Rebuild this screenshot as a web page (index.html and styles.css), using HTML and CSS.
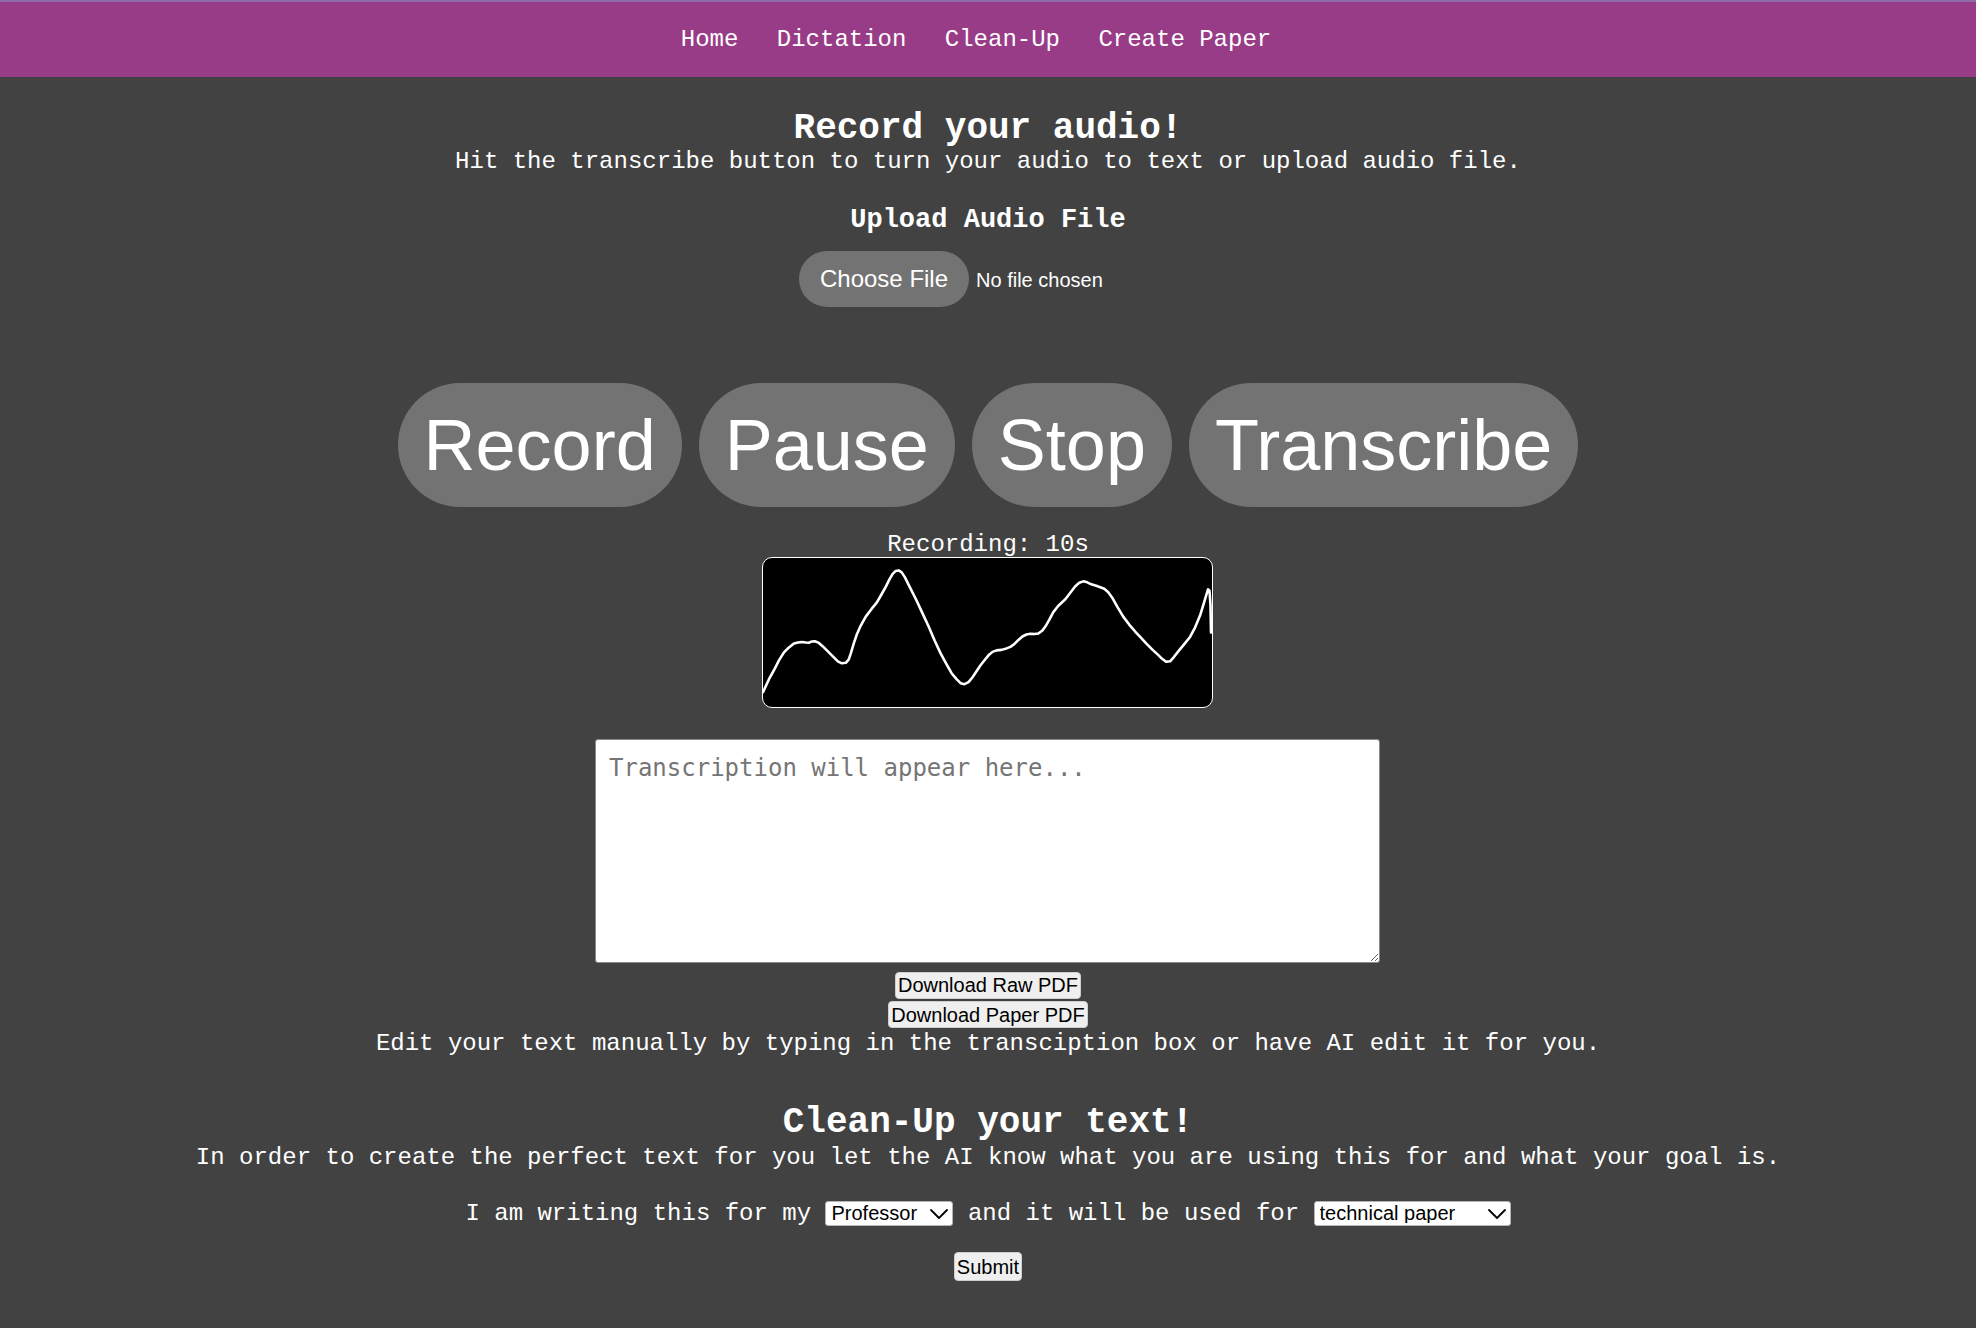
FILE: index.html
```html
<!DOCTYPE html>
<html lang="en">
<head>
<meta charset="utf-8">
<title>Dictation</title>
<link rel="stylesheet" href="styles.css">
</head>
<body>
<header class="topbar">
  <nav class="nav">
    <a href="#">Home</a>
    <a href="#">Dictation</a>
    <a href="#">Clean-Up</a>
    <a href="#">Create Paper</a>
  </nav>
</header>
<main class="page">
  <section class="block">
    <h2 class="title">Record your audio!</h2>
    <p class="lead">Hit the transcribe button to turn your audio to text or upload audio file.</p>
    <h3 class="subtitle">Upload Audio File</h3>
    <div class="upload"><input type="file" class="file" accept="audio/*"></div>
    <div class="controls">
      <button class="big" type="button">Record</button>
      <button class="big" type="button">Pause</button>
      <button class="big" type="button">Stop</button>
      <button class="big" type="button">Transcribe</button>
    </div>
    <div class="status">Recording: 10s</div>
    <div class="wave">
      <svg class="wave-svg" viewBox="0 0 450 150" preserveAspectRatio="none">
        <polyline fill="none" stroke="#fff" stroke-width="2.6" stroke-linejoin="round" stroke-linecap="round"
          points="0,135 6,122 11,113 16,103 21,95 26,90 31,86 35,85 39,84.5 43,85 46,85.3 49,84 52,83.8 56,85.5 60,89 65,94 71,100 75,104 79,106 83,105.5 86,102 88,96 91,86 94,77 98,68 103,59 109,51 114,45 118,38 123,29 127,21 130,16 133,13 136,12.5 139,14.5 142,19 147,29 154,43 160,56 166,69 172,83 178,96 184,107 189,116 194,122 198,126 202,127 206,125 210,120 214,114 218,108 222,103 226,98 230,94.5 234,93 239,92.5 244,91 248,89.5 252,86.5 256,82.5 260,79 264,77 268,76.3 272,76.5 276,76 280,73 283,69 287,62 291,54.5 296,48 303,41.5 308,35 313,28.5 317,25 321,23.5 325,24.5 329,26.5 334,28 338,29.5 342,31 346,34.5 350,40 355,49 361,59 367,67 373,74 378,79.5 384,86 391,93 396,97.5 400,101.5 404,104.5 408,104 412,99.5 417,93 422,87 428,79.5 433,70 438,58 442,45 446,31.5 447.5,33 448.5,48 449,75"/>
      </svg>
    </div>
    <textarea class="transcript" placeholder="Transcription will appear here..."></textarea>
    <div class="downloads">
      <button class="small" type="button">Download Raw PDF</button>
      <button class="small" type="button">Download Paper PDF</button>
    </div>
    <p class="note">Edit your text manually by typing in the transciption box or have AI edit it for you.</p>
  </section>
  <section class="block">
    <h2 class="title title-cleanup">Clean-Up your text!</h2>
    <p class="lead lead-cleanup">In order to create the perfect text for you let the AI know what you are using this for and what your goal is.</p>
    <div class="choices">
      <span>I am writing this for my</span>
      <span class="select-wrap">
        <select class="choice choice-role">
          <option>Professor</option>
          <option>Boss</option>
          <option>Friend</option>
          <option>Client</option>
        </select>
        <svg class="chev" viewBox="0 0 18 10"><polyline points="1,1 9,9 17,1" fill="none" stroke="#000" stroke-width="1.8" stroke-linecap="round" stroke-linejoin="round"/></svg>
      </span>
      <span>and it will be used for</span>
      <span class="select-wrap">
        <select class="choice choice-use">
          <option>technical paper</option>
          <option>email</option>
          <option>essay</option>
          <option>report</option>
        </select>
        <svg class="chev" viewBox="0 0 18 10"><polyline points="1,1 9,9 17,1" fill="none" stroke="#000" stroke-width="1.8" stroke-linecap="round" stroke-linejoin="round"/></svg>
      </span>
    </div>
    <button class="small submit" type="button">Submit</button>
  </section>
</main>
</body>
</html>
```

FILE: styles.css
```css
* {
  box-sizing: border-box;
}

html,
body {
  margin: 0;
  padding: 0;
}

body {
  background: #424242;
  color: #ffffff;
  font-family: "Liberation Mono", "Courier New", monospace;
  font-size: 24px;
  min-height: 1328px;
}

.topbar {
  background: #983c87;
  border-top: 2px solid #8c6aa7;
  height: 77px;
  display: flex;
  align-items: center;
}

.nav {
  width: 100%;
  display: flex;
  justify-content: center;
  gap: 38.4px;
  padding-right: 24px;
  line-height: 27px;
}

.nav a {
  color: #ffffff;
  text-decoration: none;
}

.page {
  display: flex;
  flex-direction: column;
  align-items: center;
  text-align: center;
}

.block {
  display: flex;
  flex-direction: column;
  align-items: center;
}

.title {
  margin: 33.2px 0 0;
  font-size: 36px;
  line-height: 38px;
  font-weight: bold;
}

.title-cleanup {
  margin-top: 46.1px;
}

.lead {
  margin: 0;
  line-height: 27.2px;
}

.lead-cleanup {
  margin-top: 2px;
}

.subtitle {
  margin: 30px 0 0;
  font-size: 27px;
  line-height: 31.7px;
  font-weight: bold;
}

.upload {
  margin-top: 14px;
  width: 378px;
  height: 56px;
  text-align: left;
}

.file {
  width: 378px;
  color: #ffffff;
  font-family: "Liberation Sans", Arial, sans-serif;
  font-size: 20px;
}

.file::file-selector-button {
  height: 56px;
  margin: 0 7px 0 0;
  padding: 0 21px;
  border: none;
  border-radius: 28px;
  background: #737373;
  color: #ffffff;
  font-family: "Liberation Sans", Arial, sans-serif;
  font-size: 24px;
}

.controls {
  margin-top: 76px;
  display: flex;
  gap: 17px;
}

.big {
  height: 124px;
  padding: 0 26px;
  border: none;
  border-radius: 62px;
  background: #737373;
  color: #ffffff;
  font-family: "Liberation Sans", Arial, sans-serif;
  font-size: 72px;
  line-height: 1;
}

.status {
  margin-top: 27.2px;
  line-height: 22.6px;
}

.wave {
  width: 451px;
  height: 151px;
  border: 1.5px solid #ffffff;
  border-radius: 10px;
  background: #000000;
  overflow: hidden;
}

.wave-svg {
  display: block;
  width: 100%;
  height: 100%;
}

.transcript {
  margin-top: 30.7px;
  width: 785px;
  height: 224px;
  padding: 14px 12.5px;
  border: 1.5px solid #8a8a8a;
  border-radius: 3px;
  background: #ffffff;
  color: #000000;
  font-family: "DejaVu Sans Mono", "Liberation Mono", monospace;
  font-size: 24px;
}

.transcript::placeholder {
  color: #757575;
}

.downloads {
  margin-top: 9px;
  display: flex;
  flex-direction: column;
  align-items: center;
  gap: 1.7px;
}

.small {
  height: 27.5px;
  padding: 0 2px;
  border: 1px solid #cfcfcf;
  border-radius: 4px;
  background: #efefef;
  color: #000000;
  font-family: "Liberation Sans", Arial, sans-serif;
  font-size: 20px;
  line-height: 1;
}

.note {
  margin: 2.2px 0 0;
  line-height: 27.2px;
}

.choices {
  margin-top: 28.6px;
  height: 27px;
  display: flex;
  align-items: center;
  justify-content: center;
  gap: 14.4px;
  white-space: nowrap;
}

.select-wrap {
  position: relative;
  display: inline-flex;
}

.choice {
  appearance: none;
  -webkit-appearance: none;
  height: 25px;
  padding: 0 0 0 5px;
  border: 1px solid #b5b5b5;
  border-radius: 3px;
  background: #ffffff;
  color: #000000;
  font-family: "Liberation Sans", Arial, sans-serif;
  font-size: 20px;
  line-height: 1;
}

.choice-role {
  width: 128px;
}

.choice-use {
  width: 197px;
}

.chev {
  position: absolute;
  right: 5px;
  top: 8px;
  width: 18px;
  height: 10px;
  pointer-events: none;
}

.submit {
  margin-top: 25.8px;
  height: 28.4px;
}
```
